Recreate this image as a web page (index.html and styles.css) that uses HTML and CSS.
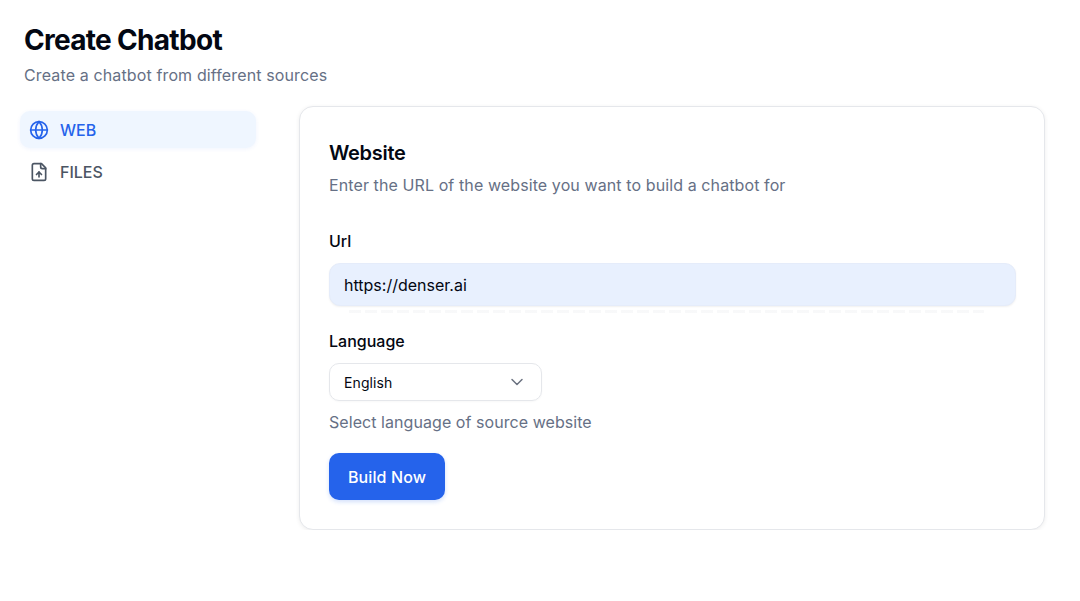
FILE: index.html
```html
<!DOCTYPE html>
<html lang="en">
<head>
    <meta charset="UTF-8">
    <meta name="viewport" content="width=device-width, initial-scale=1.0">
    <title>Create Chatbot</title>
    <link rel="stylesheet" href="styles.css">
</head>
<body>
    <div class="page">
        <div class="header">
            <h1 class="title">Create Chatbot</h1>
            <p class="subtitle">Create a chatbot from different sources</p>
        </div>

        <div class="layout">
            <div class="sidebar">
                <a class="nav-item active">
                    <svg width="20" height="20" viewBox="0 0 24 24" fill="none" stroke="currentColor" stroke-width="2" stroke-linecap="round" stroke-linejoin="round">
                        <circle cx="12" cy="12" r="10"/>
                        <path d="M12 2a14.5 14.5 0 0 0 0 20 14.5 14.5 0 0 0 0-20"/>
                        <path d="M2 12h20"/>
                    </svg>
                    WEB
                </a>
                <a class="nav-item">
                    <svg width="20" height="20" viewBox="0 0 24 24" fill="none" stroke="currentColor" stroke-width="2" stroke-linecap="round" stroke-linejoin="round">
                        <path d="M15 2H6a2 2 0 0 0-2 2v16a2 2 0 0 0 2 2h12a2 2 0 0 0 2-2V7Z"/>
                        <path d="M14 2v4a2 2 0 0 0 2 2h4"/>
                        <path d="M12 12v6"/>
                        <path d="m15 15-3-3-3 3"/>
                    </svg>
                    FILES
                </a>
            </div>

            <div class="card">
                <h2 class="card-title">Website</h2>
                <p class="muted card-desc">Enter the URL of the website you want to build a chatbot for</p>

                <label class="label url-label">Url</label>
                <div class="url-input">https://denser.ai</div>
                <div class="autofill-ghost"></div>

                <label class="label lang-label">Language</label>
                <div class="select">
                    <span>English</span>
                    <svg width="20" height="20" viewBox="0 0 24 24" fill="none" stroke="currentColor" stroke-width="1.8" stroke-linecap="round" stroke-linejoin="round">
                        <path d="m6 9 6 6 6-6"/>
                    </svg>
                </div>
                <p class="muted lang-hint">Select language of source website</p>

                <button class="build-btn">Build Now</button>
            </div>
        </div>
    </div>
</body>
</html>
```

FILE: styles.css
```css
:root {
    --color-text: #030712;
    --color-muted: #667085;
    --color-primary: #2563eb;
    --color-border: #e5e7eb;
}

* {
    margin: 0;
    padding: 0;
    box-sizing: border-box;
    font-family: Inter, 'Noto Sans', sans-serif;
}

body {
    background-color: #fff;
    color: var(--color-text);
    overflow: hidden;
}

.page {
    padding: 21px 35px 0 20px;
}

.header {
    padding-left: 4px;
    margin-bottom: 19px;
}

.title {
    font-size: 28px;
    line-height: 38px;
    font-weight: 700;
    letter-spacing: -0.7px;
}

.subtitle {
    margin-top: 4px;
    font-size: 16px;
    line-height: 24px;
    letter-spacing: 0.13px;
    color: var(--color-muted);
}

.layout {
    display: flex;
    align-items: flex-start;
    gap: 43px;
}

.sidebar {
    width: 236px;
    flex-shrink: 0;
    padding-top: 5px;
    display: flex;
    flex-direction: column;
    gap: 5px;
}

.nav-item {
    display: flex;
    align-items: center;
    gap: 11px;
    height: 37px;
    padding: 0 9px;
    border-radius: 10px;
    font-size: 16px;
    font-weight: 500;
    color: #4b5563;
}

.nav-item.active {
    background-color: #eff6ff;
    color: var(--color-primary);
    box-shadow: 0 1px 4px rgba(37, 99, 235, 0.07);
}

.card {
    flex: 1;
    height: 424px;
    padding: 33px 28px 0 29px;
    background-color: #fff;
    border: 1px solid var(--color-border);
    border-radius: 14px;
    box-shadow: 0 1px 4px rgba(0, 0, 0, 0.07);
}

.card-title {
    font-size: 20px;
    line-height: 26px;
    font-weight: 600;
    letter-spacing: -0.3px;
}

.muted {
    font-size: 16px;
    line-height: 24px;
    color: var(--color-muted);
}

.card-desc {
    margin-top: 7px;
    letter-spacing: 0.1px;
}

.label {
    display: block;
    font-size: 16px;
    line-height: 24px;
    font-weight: 500;
}

.url-label {
    margin-top: 32px;
}

.url-input {
    margin-top: 10px;
    height: 43px;
    padding: 0 14px;
    display: flex;
    align-items: center;
    background-color: #e8f0fe;
    border: 1px solid #e5ecfa;
    border-radius: 11px;
    font-size: 16px;
    box-shadow: 0 1px 2px rgba(0, 0, 0, 0.06);
}

.autofill-ghost {
    height: 3px;
    margin: 4px 32px 0 20px;
    background: repeating-linear-gradient(90deg, #f1f2f4 0 12px, #fff 12px 16px);
    opacity: 0.5;
}

.lang-label {
    margin-top: 16px;
}

.select {
    margin-top: 10px;
    width: 213px;
    height: 38px;
    padding: 0 8px 0 14px;
    display: flex;
    align-items: center;
    justify-content: space-between;
    border: 1px solid var(--color-border);
    border-radius: 10px;
    font-size: 14px;
    letter-spacing: 0.1px;
    box-shadow: 0 1px 2px rgba(0, 0, 0, 0.03);
}

.select svg {
    margin-right: 6px;
    color: #6b7280;
}

.lang-hint {
    margin-top: 9px;
    letter-spacing: 0.06px;
}

.build-btn {
    display: block;
    margin-top: 19px;
    width: 116px;
    height: 47px;
    background-color: var(--color-primary);
    color: #fff;
    border: none;
    border-radius: 10px;
    font-size: 16px;
    font-weight: 500;
    letter-spacing: 0.1px;
    box-shadow: 0 2px 4px rgba(37, 99, 235, 0.2);
    cursor: pointer;
}
```
